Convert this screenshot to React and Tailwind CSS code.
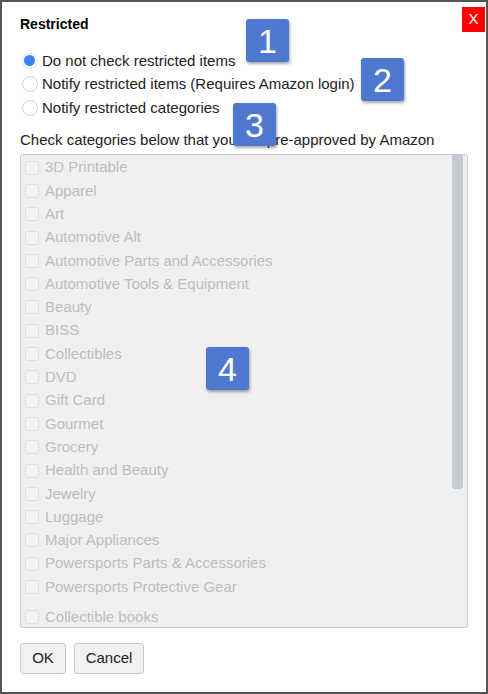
import React from "react";

const cats = [
  "3D Printable",
  "Apparel",
  "Art",
  "Automotive Alt",
  "Automotive Parts and Accessories",
  "Automotive Tools & Equipment",
  "Beauty",
  "BISS",
  "Collectibles",
  "DVD",
  "Gift Card",
  "Gourmet",
  "Grocery",
  "Health and Beauty",
  "Jewelry",
  "Luggage",
  "Major Appliances",
  "Powersports Parts & Accessories",
  "Powersports Protective Gear",
];

function Badge({ n, className }) {
  return (
    <div
      className={
        "absolute w-[43px] h-[43px] bg-[#4f78d0] rounded-[3px] text-white flex items-center justify-center text-[34px] leading-none shadow-[1px_2px_3px_rgba(0,0,0,0.35)] " +
        className
      }
    >
      {n}
    </div>
  );
}

function Radio({ checked, label }) {
  return (
    <div className="flex items-center h-[23.5px]">
      <div className="w-[19px] flex justify-center">
        {checked ? (
          <div className="w-[16px] h-[16px] rounded-full border border-[#dfe8f8] flex items-center justify-center bg-white">
            <div className="w-[11px] h-[11px] rounded-full bg-[#3b82f6]" />
          </div>
        ) : (
          <div className="w-[16px] h-[16px] rounded-full border border-[#d4d4d4] bg-white" />
        )}
      </div>
      <span className="ml-[3px] text-[15px] text-[#222]">{label}</span>
    </div>
  );
}

function Item({ label, extra }) {
  return (
    <div className={"flex items-center h-[23.3px] " + (extra || "")}>
      <div className="ml-[4px] w-[14px] h-[14px] rounded-[3px] border border-[#dedede] bg-[#f3f3f3]" />
      <span className="ml-[6px] text-[15px] text-[#bdbdbd] whitespace-nowrap">{label}</span>
    </div>
  );
}

export default function App() {
  return (
    <div
      className="relative w-[488px] h-[694px] bg-white border-2 border-[#555] overflow-hidden"
      style={{ fontFamily: '"Liberation Sans", Arial, sans-serif' }}
    >
      <div className="absolute right-[1px] top-[5px] w-[23px] h-[25px] bg-[#ff0000] text-white flex items-center justify-center text-[15px]">
        X
      </div>
      <div className="px-[18px] pt-[13px] flex flex-col">
        <div className="text-[14px] font-bold text-black leading-[18px]">Restricted</div>
        <div className="mt-[16px] flex flex-col">
          <Radio checked label="Do not check restricted items" />
          <Radio label="Notify restricted items (Requires Amazon login)" />
          <Radio label="Notify restricted categories" />
        </div>
        <div className="mt-[11px] text-[15px] text-[#222] leading-[18px]">
          Check categories below that you are pre-approved by Amazon
        </div>
        <div className="mt-[5px] relative w-[448px] h-[474px] bg-[#f0f0f0] border border-[#c3c7ce] rounded-[3px] overflow-hidden">
          <div className="absolute right-[4px] top-0 w-[11px] h-[334px] bg-[#c4cbd3] rounded-b-[3px]" />
          <div className="flex flex-col pt-[1.5px]">
            {cats.map((c) => (
              <Item key={c} label={c} />
            ))}
            <Item label="Collectible books" extra="mt-[6.5px]" />
          </div>
        </div>
        <div className="mt-[15px] flex gap-[8px]">
          <button className="w-[46px] h-[31px] bg-[#f1f1f1] border border-[#c3c7ce] rounded-[3px] text-[15px] text-[#222]">
            OK
          </button>
          <button className="w-[70px] h-[31px] bg-[#f1f1f1] border border-[#c3c7ce] rounded-[3px] text-[15px] text-[#222]">
            Cancel
          </button>
        </div>
      </div>
      <Badge n="1" className="left-[244px] top-[17px]" />
      <Badge n="2" className="left-[359px] top-[56px]" />
      <Badge n="3" className="left-[231px] top-[101px]" />
      <Badge n="4" className="left-[204px] top-[345px]" />
    </div>
  );
}
